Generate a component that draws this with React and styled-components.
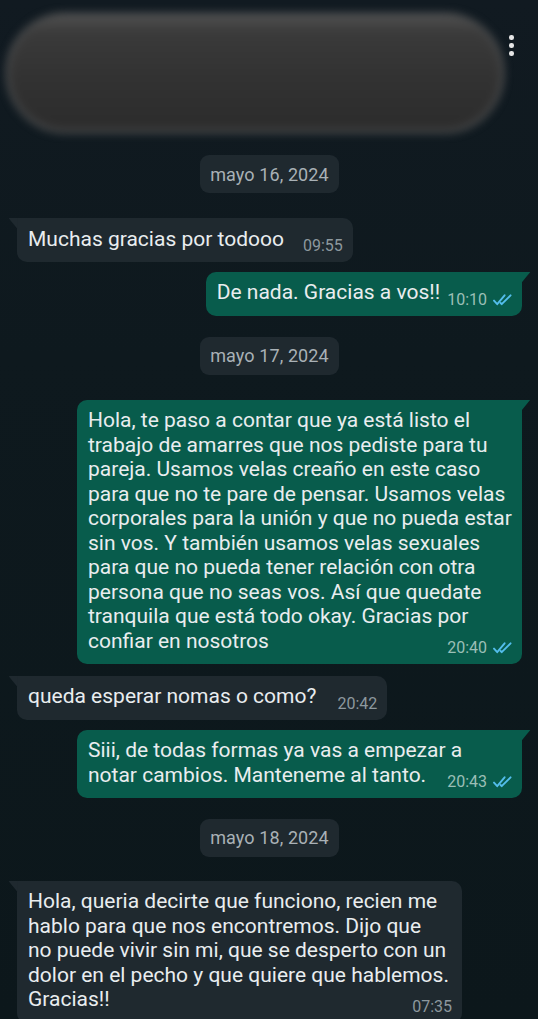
import React from "react";
import styled, { createGlobalStyle, css } from "styled-components";

const Global = createGlobalStyle`
  html, body {
    margin: 0;
    padding: 0;
    background: #0d171c;
  }
  * { box-sizing: border-box; }
`;

const Screen = styled.div`
  width: 538px;
  height: 1019px;
  overflow: hidden;
  background: linear-gradient(180deg, #111a21 0%, #0e191e 35%, #0c171b 100%);
  font-family: Roboto, "Noto Sans", "Liberation Sans", sans-serif;
  color: #e9edef;
`;

const Header = styled.header`
  display: flex;
  align-items: flex-start;
  height: 140px;
  padding: 13px 0 0 6px;
`;

const BlurredBar = styled.div`
  width: 498px;
  height: 120px;
  border-radius: 60px;
  border: 3px solid #5c5c5c;
  background: linear-gradient(180deg, #4e4e4e 0%, #3a3a3a 15%, #323232 55%, #2c2c2c 100%);
  filter: blur(4.5px);
`;

const MenuDots = styled.div`
  display: flex;
  flex-direction: column;
  gap: 3.5px;
  margin: 22px 0 0 5px;
`;

const Dot = styled.span`
  width: 4.5px;
  height: 4.5px;
  border-radius: 50%;
  background: #e6e6e6;
`;

const Chat = styled.main`
  display: flex;
  flex-direction: column;
  padding: 0 16px 0 17px;
`;

const DateChip = styled.div`
  align-self: center;
  margin-top: ${(p) => p.$gap}px;
  height: 38px;
  display: flex;
  align-items: center;
  padding: 0 10px;
  border-radius: 9px;
  background: #1f292f;
  color: #a9b1b6;
  font-size: 18px;
  letter-spacing: 0.1px;
`;

const Bubble = styled.div`
  position: relative;
  display: flow-root;
  align-self: ${(p) => (p.$out ? "flex-end" : "flex-start")};
  width: ${(p) => (p.$wide ? "445px" : "auto")};
  max-width: 445px;
  margin-top: ${(p) => p.$gap}px;
  padding: 8.5px 10px 7.5px 11px;
  border-radius: 10px;
  background: ${(p) => (p.$out ? "#085c4c" : "#1f292f")};
  font-size: 21px;
  line-height: 24.5px;
  color: #e9edef;
  ${(p) =>
    p.$out
      ? css`
          border-top-right-radius: 0;
          &::before {
            content: "";
            position: absolute;
            top: 0;
            right: -8.5px;
            width: 9px;
            height: 11px;
            background: #085c4c;
            clip-path: polygon(0 0, 100% 0, 0 100%);
          }
        `
      : css`
          border-top-left-radius: 0;
          &::before {
            content: "";
            position: absolute;
            top: 0;
            left: -8.5px;
            width: 9px;
            height: 11px;
            background: #1f292f;
            clip-path: polygon(0 0, 100% 0, 100% 100%);
          }
        `}
`;

const Meta = styled.span`
  float: right;
  display: inline-flex;
  align-items: center;
  gap: 6px;
  margin-top: 11.8px;
  margin-left: ${(p) => p.$space}px;
  height: 16px;
  font-size: 16px;
  line-height: 16px;
  color: ${(p) => (p.$out ? "#9bbfb6" : "#8d989e")};
`;

const Ticks = () => (
  <svg width="19" height="12" viewBox="0 0 19 12" fill="none">
    <path
      d="M1 6.6 L4.2 10.2 L11.6 1.3"
      stroke="#53bdeb"
      strokeWidth="1.9"
      strokeLinecap="round"
      strokeLinejoin="round"
    />
    <path
      d="M7.6 9.0 L8.7 10.2 L17.6 1.3"
      stroke="#53bdeb"
      strokeWidth="1.9"
      strokeLinecap="round"
      strokeLinejoin="round"
    />
  </svg>
);

const Message = ({ out, gap, time, space = 20, lines }) => (
  <Bubble $out={out} $gap={gap} $wide={lines.length > 1}>
    {lines.map((line, i) => (
      <React.Fragment key={i}>
        {i > 0 && <br />}
        {line}
      </React.Fragment>
    ))}
    <Meta $out={out} $space={space}>
      {time}
      {out && <Ticks />}
    </Meta>
  </Bubble>
);

export default function App() {
  return (
    <Screen>
      <Global />
      <Header>
        <BlurredBar />
        <MenuDots>
          <Dot />
          <Dot />
          <Dot />
        </MenuDots>
      </Header>
      <Chat>
        <DateChip $gap={15}>mayo 16, 2024</DateChip>
        <Message gap={25} time="09:55" space={19} lines={["Muchas gracias por todooo"]} />
        <Message out gap={10} time="10:10" space={7} lines={["De nada. Gracias a vos!!"]} />
        <DateChip $gap={21}>mayo 17, 2024</DateChip>
        <Message
          out
          gap={25}
          time="20:40"
          lines={[
            "Hola, te paso a contar que ya está listo el",
            "trabajo de amarres que nos pediste para tu",
            "pareja. Usamos velas creaño en este caso",
            "para que no te pare de pensar. Usamos velas",
            "corporales para la unión y que no pueda estar",
            "sin vos. Y también usamos velas sexuales",
            "para que no pueda tener relación con otra",
            "persona que no seas vos. Así que quedate",
            "tranquila que está todo okay. Gracias por",
            "confiar en nosotros",
          ]}
        />
        <Message gap={12} time="20:42" space={21} lines={["queda esperar nomas o como?"]} />
        <Message
          out
          gap={10}
          time="20:43"
          lines={["Siii, de todas formas ya vas a empezar a", "notar cambios. Manteneme al tanto."]}
        />
        <DateChip $gap={21}>mayo 18, 2024</DateChip>
        <Message
          gap={24}
          time="07:35"
          lines={[
            "Hola, queria decirte que funciono, recien me",
            "hablo para que nos encontremos. Dijo que",
            "no puede vivir sin mi, que se desperto con un",
            "dolor en el pecho y que quiere que hablemos.",
            "Gracias!!",
          ]}
        />
      </Chat>
    </Screen>
  );
}
